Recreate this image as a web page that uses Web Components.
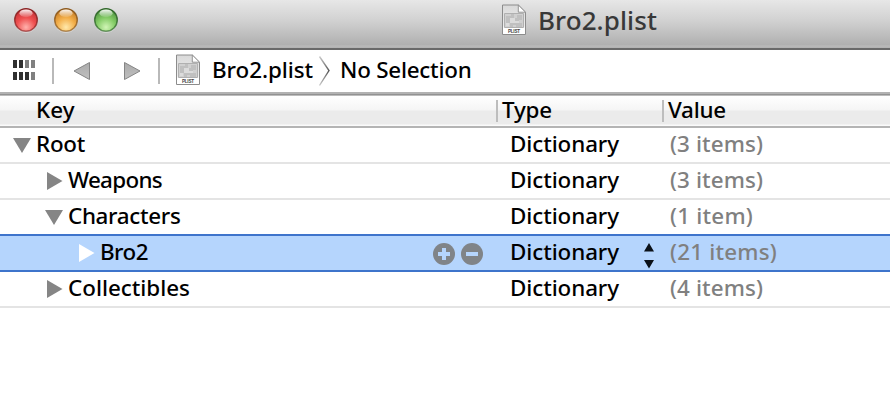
<!DOCTYPE html>
<html lang="en">
<head>
<meta charset="utf-8">
<title>Bro2.plist</title>
<style>
html,body{margin:0;height:402px;overflow:hidden;background:#fff;font-family:"Noto Sans","Open Sans",sans-serif;font-size:22.4px;color:#000}
</style>
</head>
<body>
<plist-window></plist-window>
<script>
const def=(name,html,init)=>customElements.define(name,class extends HTMLElement{
  constructor(){super();this.attachShadow({mode:'open'}).innerHTML=html;}
  connectedCallback(){if(init)init.call(this,this.shadowRoot);}
});

/* Text tracked out or in so that its run fills the given width */
def('fit-text',`<style>:host{display:block;white-space:nowrap;line-height:28px;flex:none;font-weight:500}span{display:inline-block;margin-left:1px}</style><span><slot></slot></span>`,function(r){
  const s=r.querySelector('span'),n=this.textContent.length,w=+this.getAttribute('w');
  s.style.letterSpacing=((w-s.getBoundingClientRect().width)/n)+'px';
  this.style.width=w+'px';
});

def('traffic-light',`<style>:host{display:block;width:26px;height:26px}svg{display:block}</style>
<svg width="26" height="26" viewBox="0 0 26 26"><defs>
<radialGradient id="g" cx=".5" cy=".82" r=".75"><stop offset="0" stop-color="var(--lo)"/><stop offset=".55" stop-color="var(--mid)"/><stop offset="1" stop-color="var(--hi)"/></radialGradient>
<linearGradient id="s" x1="0" y1="0" x2="0" y2="1"><stop offset="0" stop-color="#fff" stop-opacity=".95"/><stop offset="1" stop-color="#fff" stop-opacity=".1"/></linearGradient>
<linearGradient id="e" x1="0" y1="0" x2="0" y2="1"><stop offset="0" stop-color="var(--rim)"/><stop offset="1" stop-color="var(--rim)" stop-opacity=".65"/></linearGradient></defs>
<circle cx="13" cy="13.8" r="12" fill="#fff" opacity=".45"/><circle cx="13" cy="13" r="11.3" fill="url(#g)" stroke="url(#e)" stroke-width="1.5"/>
<ellipse cx="13" cy="6.3" rx="6.6" ry="3.9" fill="url(#s)"/></svg>`);

def('plist-icon',`<style>:host{display:block;width:26px;height:32px;flex:none}svg{display:block}text{font:700 4.6px "Liberation Sans",sans-serif}</style>
<svg width="26" height="32" viewBox="0 0 26 32"><defs><linearGradient id="p" x2="0" y2="1"><stop stop-color="#d9d9d9"/><stop offset=".7" stop-color="#ededed"/><stop offset=".8" stop-color="#fff"/></linearGradient></defs>
<path d="M1.500 1h15.800L24.500 8.200V30.500h-23z" fill="url(#p)" stroke="#8c8c8c"/>
<path d="M17.300 1v7.200h7.200z" fill="#fff" stroke="#8c8c8c" stroke-width=".9"/>
<path d="M3.500 9.500h19v14h-19z" fill="#d0d0d0" stroke="#b0b0b0"/>
<path d="M5 12h5v-2h3v4h3v-3h5v5h-3v3h3v4h-6v-2h-3v2h-3v-4H5z" fill="#c0c0c0"/><path d="M9 14h5v3h4v2H9zM5 19h3v3H5z" fill="#dcdcdc"/>
<text x="13" y="28.500" text-anchor="middle" textLength="12" fill="#444">PLIST</text></svg>`);

def('title-bar',`<style>:host{display:flex;box-sizing:border-box;height:50px;border-bottom:2px solid #696969;background:linear-gradient(#e7e7e7 0,#d0d0d0 45%,#b0b0b0 93%,#bababa 96%,#b0b0b0);color:#383838;font-size:26px}
.l{display:flex;gap:14px;padding:7px 0 0 13px;width:488px;box-sizing:border-box}
plist-icon{margin:4px 0 0 13px}fit-text{margin:6px 0 0 10px}
.r{--rim:#8b2525;--hi:#c93338;--mid:#ef5050;--lo:#ffb2ad}.y{--rim:#8d5a1e;--hi:#c98129;--mid:#f3ae48;--lo:#ffe9ac}.g{--rim:#30672a;--hi:#539a43;--mid:#84cc66;--lo:#d1f5b6}</style>
<div class="l"><traffic-light class="r"></traffic-light><traffic-light class="y"></traffic-light><traffic-light class="g"></traffic-light></div>
<plist-icon></plist-icon><fit-text w="119">Bro2.plist</fit-text>`);

def('jump-bar',`<style>:host{display:flex;box-sizing:border-box;height:46px;border-bottom:1px solid #bcbcbc;background:linear-gradient(#fff 42px,#b2b2b2 42px,#b2b2b2 44px,#929292 44px)}
svg{display:block;flex:none}plist-icon{margin-top:4px}fit-text{margin-top:6px}.a{margin-left:10px}.b{margin-left:5px}</style>
<svg width="175" height="42" viewBox="0 0 175 42"><defs><linearGradient id="a" x2="0" y2="1"><stop stop-color="#aaa"/><stop offset="1" stop-color="#c0c0c0"/></linearGradient></defs>
<path d="M13 10h4v8h-4zM19 10h4v8h-4zM13 22h4v8h-4zM19 22h4v8h-4zM25 22h4v8h-4z" fill="#303030"/><path d="M25 10h4v8h-4zM31 10h4v8h-4zM31 22h4v8h-4z" fill="#808080"/>
<path d="M52 8h2v26h-2zM158 8h2v26h-2z" fill="#b9b9b9"/>
<path d="M89.500 12.500v17L74 21zM124.500 12.500v17L140 21z" fill="url(#a)" stroke="#858585"/></svg>
<plist-icon></plist-icon><fit-text class="a" w="101">Bro2.plist</fit-text>
<svg width="22" height="42" viewBox="0 0 22 42"><path d="M7.500 6.500L17 20.500 7.500 35.500" fill="none" stroke="url(#c)" stroke-width="1.4"/><defs><linearGradient id="c" x2="0" y2="1"><stop stop-color="#ccc"/><stop offset=".5" stop-color="#555"/><stop offset="1" stop-color="#ccc"/></linearGradient></defs></svg>
<fit-text class="b" w="131.500">No Selection</fit-text>`);

def('table-header',`<style>:host{display:grid;grid-template-columns:496px 166px 1fr;box-sizing:border-box;height:32px;border-bottom:2px solid #b4b4b4;background:linear-gradient(#fff 0,#f5f5f5 14px,#ebebeb 15px,#ebebeb 28px,#fafafa 29px)}
div{display:flex;padding-left:5px}div+div{background:linear-gradient(#bdbdbd,#bdbdbd) 0 4px/2px 22px no-repeat}.k{padding-left:35px}</style>
<div class="k"><fit-text w="38.500">Key</fit-text></div><div><fit-text w="50">Type</fit-text></div><div><fit-text w="58">Value</fit-text></div>`);

def('disclosure-arrow',`<style>:host{display:block;width:20px;height:20px;flex:none;color:#858585}svg{display:block}:host([open]) .c,:host(:not([open])) .o{display:none}</style>
<svg width="20" height="20" viewBox="0 0 20 20"><path class="o" d="M1 3h18L10 18z" fill="currentColor"/><path class="c" d="M3 1l15.500 9L3 19z" fill="currentColor"/></svg>`);

customElements.define('plist-row',class extends HTMLElement{
  connectedCallback(){
    const a=n=>this.getAttribute(n),sel=this.hasAttribute('selected');
    this.attachShadow({mode:'open'}).innerHTML=`<style>
:host{display:grid;grid-template-columns:509px 159px 1fr;box-sizing:border-box;height:36px;border-bottom:2px solid #e4e4e4}
:host([before-selected]){height:34px;border:0}
:host([selected]){height:38px;background:#b5d5fd;border-top:2px solid #3e74cb;border-bottom-color:#3e74cb}
div{display:flex;align-items:flex-start}.k{padding-left:calc(12px + var(--d)*32px)}
fit-text{margin:2px 0 0}.k fit-text{margin-left:3px}.v fit-text{margin-left:1px}.v{color:#808080}disclosure-arrow{margin-top:7px}:host([selected]) disclosure-arrow{color:#fff}
.b{margin:7px 25px 0 auto}.s{margin:7px 13px 0 auto}svg{display:block;flex:none}</style>
<div class="k" style="--d:${a('depth')}"><disclosure-arrow ${this.hasAttribute('open')?'open':''}></disclosure-arrow><fit-text w="${a('kw')}">${a('key')}</fit-text>
${sel?'<svg class="b" width="51" height="22" viewBox="0 0 51 22"><circle cx="11" cy="11" r="11" fill="#808488"/><circle cx="39" cy="11" r="11" fill="#808488"/><path d="M11 5v12M5 11h12M33 11h12" stroke="#b5d5fd" stroke-width="4"/></svg>':''}</div>
<div><fit-text w="109">Dictionary</fit-text>${sel?'<svg class="s" width="12" height="26" viewBox="0 0 12 26"><path d="M1 8.500h10L6 0zM1 17h10L6 25.500z" fill="#0b1118"/></svg>':''}</div>
<div class="v"><fit-text w="${a('vw')}">${a('value')}</fit-text></div>`;
  }
});

def('plist-window',`<style>:host{display:flex;flex-direction:column;width:890px;height:402px;background:#fff}</style>
<title-bar></title-bar><jump-bar></jump-bar><table-header></table-header>
<plist-row depth="0" open key="Root" kw="49" value="(3 items)" vw="93"></plist-row>
<plist-row depth="1" key="Weapons" kw="94" value="(3 items)" vw="93"></plist-row>
<plist-row depth="1" open before-selected key="Characters" kw="112.500" value="(1 item)" vw="83"></plist-row>
<plist-row depth="2" selected key="Bro2" kw="48" value="(21 items)" vw="107"></plist-row>
<plist-row depth="1" key="Collectibles" kw="122" value="(4 items)" vw="93"></plist-row>`);
</script>
</body>
</html>
